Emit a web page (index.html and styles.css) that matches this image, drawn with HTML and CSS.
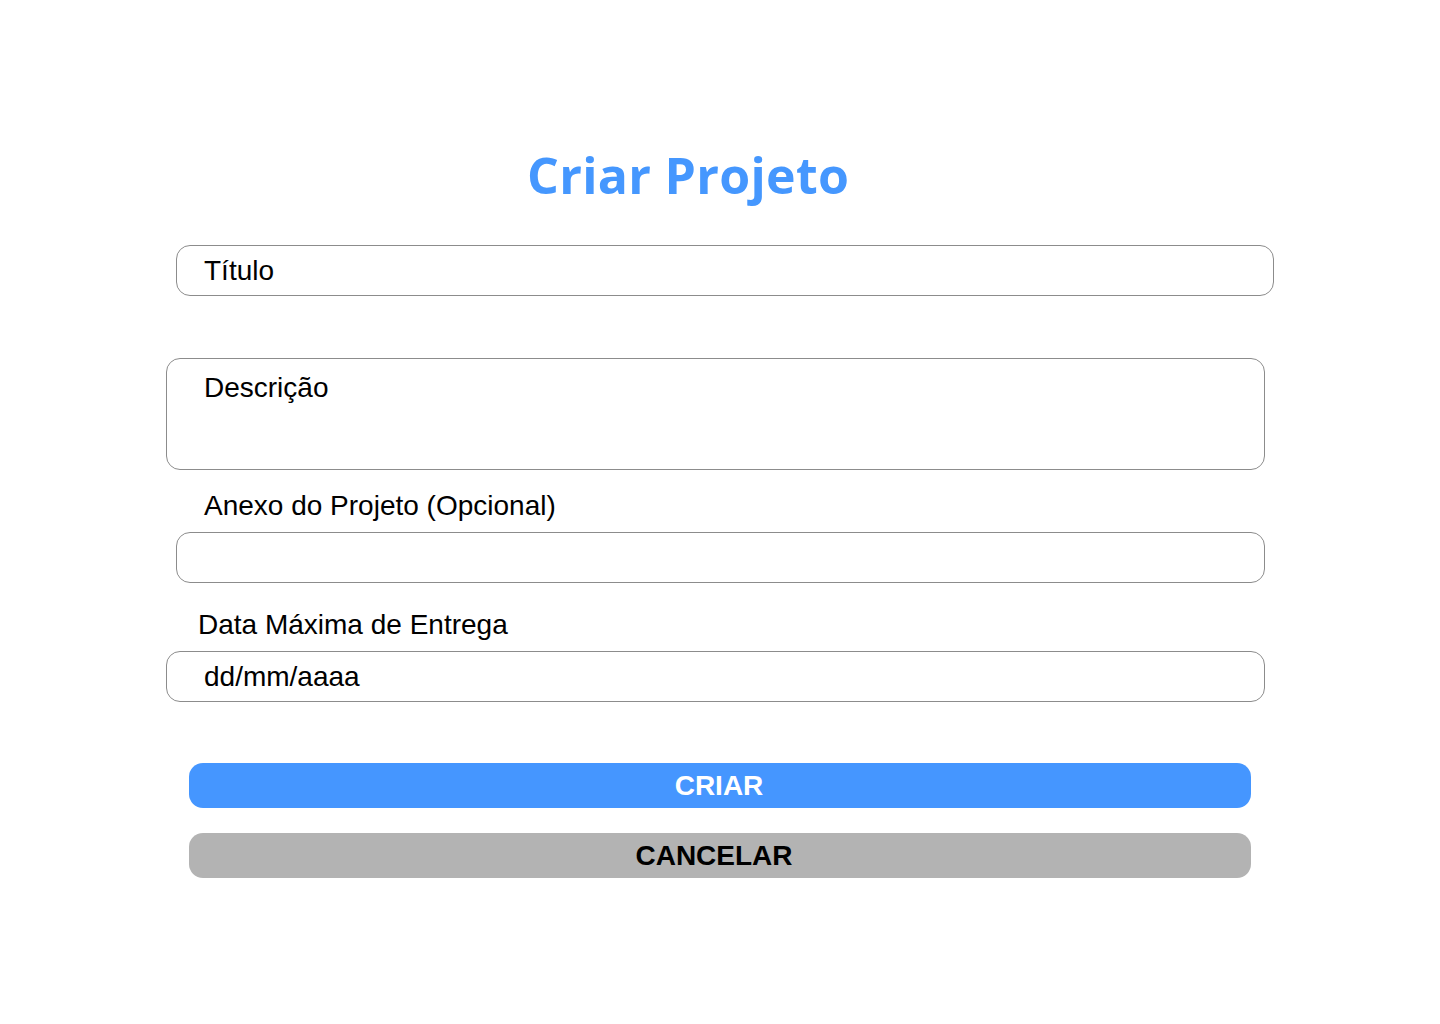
FILE: index.html
```html
<!DOCTYPE html>
<html lang="pt-BR">
<head>
<meta charset="utf-8">
<title>Criar Projeto</title>
<link rel="stylesheet" href="styles.css">
</head>
<body>
<main class="form">
  <h1 class="title">Criar Projeto</h1>
  <div class="field field-titulo">Título</div>
  <div class="field field-descricao">Descrição</div>
  <div class="label label-anexo">Anexo do Projeto (Opcional)</div>
  <div class="field field-anexo"></div>
  <div class="label label-data">Data Máxima de Entrega</div>
  <div class="field field-data">dd/mm/aaaa</div>
  <button class="btn btn-criar" type="button">CRIAR</button>
  <button class="btn btn-cancelar" type="button">CANCELAR</button>
</main>
</body>
</html>
```
FILE: styles.css
```css
html, body {
  margin: 0;
  padding: 0;
  background: #ffffff;
}

body {
  font-family: "Liberation Sans", Arial, sans-serif;
  color: #000000;
}

.form {
  display: flex;
  flex-direction: column;
  align-items: flex-start;
  padding-top: 145px;
  width: 1440px;
  box-sizing: border-box;
}

.title {
  margin: 0 0 0 527px;
  font-family: "Open Sans", sans-serif;
  font-weight: 700;
  font-size: 50px;
  line-height: 60px;
  letter-spacing: 0.3px;
  color: #4597fe;
}

.field {
  box-sizing: border-box;
  border: 1px solid #8c8c8c;
  border-radius: 14px;
  font-size: 28px;
  line-height: 48px;
  height: 51px;
  display: flex;
  align-items: center;
}

.field-titulo {
  margin: 40px 0 0 176px;
  width: 1098px;
  padding-left: 27px;
}

.field-descricao {
  margin: 62px 0 0 166px;
  width: 1099px;
  height: 112px;
  align-items: flex-start;
  line-height: 32px;
  padding: 13px 0 0 37px;
}

.label {
  font-size: 28px;
  line-height: 32px;
}

.label-anexo {
  margin: 20px 0 0 204px;
}

.field-anexo {
  margin: 10px 0 0 176px;
  width: 1089px;
}

.label-data {
  margin: 26px 0 0 198px;
}

.field-data {
  margin: 10px 0 0 166px;
  width: 1099px;
  padding-left: 37px;
}

.btn {
  box-sizing: border-box;
  border: none;
  border-radius: 14px;
  width: 1062px;
  height: 45px;
  margin-left: 189px;
  padding: 0;
  font-family: "Liberation Sans", Arial, sans-serif;
  font-weight: 700;
  font-size: 28px;
  line-height: 45px;
  text-align: center;
  cursor: pointer;
}

.btn-criar {
  margin-top: 61px;
  background: #4596ff;
  color: #ffffff;
  padding-right: 2px;
}

.btn-cancelar {
  margin-top: 25px;
  background: #b3b3b3;
  color: #000000;
  padding-right: 12px;
}
```
